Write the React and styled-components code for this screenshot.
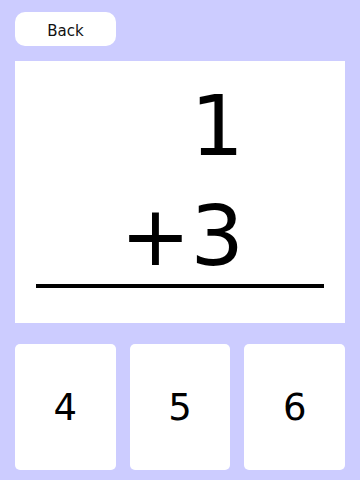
import React from 'react';
import styled, { createGlobalStyle } from 'styled-components';

const GlobalStyle = createGlobalStyle`
    html, body {
        margin:0;
        padding:0;
        background:#ccccff;
        font-family:"DejaVu Sans", "Liberation Sans", sans-serif;
    }
`

function App() {
    const answers = [4, 5, 6];

    return (
        <Page>
            <GlobalStyle />
            <TopBar>
                <BackButton>Back</BackButton>
            </TopBar>
            <ProblemCard>
                <Numbers>
                    <NumberRow>1</NumberRow>
                    <NumberRow $second>+3</NumberRow>
                </Numbers>
                <Rule />
            </ProblemCard>
            <Answers>
                {answers.map((a) => (
                    <AnswerButton key={a}>{a}</AnswerButton>
                ))}
            </Answers>
        </Page>
    )
}

export default App;

const Page = styled.div`
    width:360px;
    height:480px;
    box-sizing:border-box;
    padding:12px 15px 10px;
    display:flex;
    flex-direction:column;
`

const TopBar = styled.div`
    display:flex;
    height:34px;
    margin-bottom:15px;
`

const BackButton = styled.button`
    width:101px;
    height:34px;
    border:none;
    border-radius:10px;
    background:#ffffff;
    color:#111;
    font-family:"DejaVu Sans", sans-serif;
    font-size:15px;
    padding:3px 0 0;
    cursor:pointer;
`

const ProblemCard = styled.div`
    height:262px;
    box-sizing:border-box;
    background:#ffffff;
    padding:20px 21px 0;
    display:flex;
    flex-direction:column;
    align-items:center;
`

const Numbers = styled.div`
    display:flex;
    flex-direction:column;
    align-items:flex-end;
    width:128px;
`

const NumberRow = styled.div`
    font-size:84px;
    line-height:90px;
    height:90px;
    color:#000;
    text-align:right;
    margin-top:${(p) => (p.$second ? '20px' : '0')};
`

const Rule = styled.div`
    align-self:stretch;
    height:4px;
    margin-top:3px;
    background:#000;
`

const Answers = styled.div`
    margin-top:21px;
    display:grid;
    grid-template-columns:repeat(3, 1fr);
    gap:14px;
    height:126px;
`

const AnswerButton = styled.button`
    border:none;
    border-radius:5px;
    background:#ffffff;
    color:#000;
    font-family:"DejaVu Sans", sans-serif;
    font-size:37px;
    padding:0;
    cursor:pointer;
`
